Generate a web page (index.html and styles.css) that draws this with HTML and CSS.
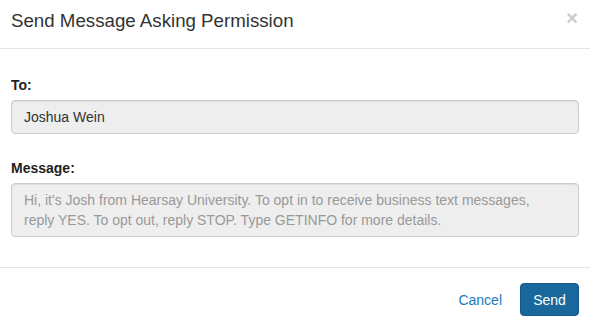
FILE: index.html
```html
<!DOCTYPE html>
<html lang="en">
<head>
  <meta charset="UTF-8">
  <title>Send Message Asking Permission</title>
  <link rel="stylesheet" href="styles.css">
</head>
<body>

<div class="modal">
  <div class="modal-header">
    <h4 class="modal-title">Send Message Asking Permission</h4>
    <button class="close" type="button">&times;</button>
  </div>

  <div class="modal-body">
    <div class="form-group">
      <label for="to">To:</label>
      <input type="text" id="to" class="form-control" value="Joshua Wein" readonly>
    </div>
    <div class="form-group">
      <label for="message">Message:</label>
      <textarea id="message" class="form-control" rows="2" readonly placeholder="Hi, it's Josh from Hearsay University. To opt in to receive business text messages, reply YES. To opt out, reply STOP. Type GETINFO for more details."></textarea>
    </div>
  </div>

  <div class="modal-footer">
    <a href="#" class="btn-link">Cancel</a>
    <button class="btn-primary" type="button">Send</button>
  </div>
</div>

</body>
</html>
```

FILE: styles.css
```css
body {
  margin: 0;
  font-family: 'Liberation Sans', Arial, sans-serif;
  font-size: 14px;
  color: #333;
  background-color: #fff;
}
.modal {
  width: 590px;
}
.modal-header {
  display: flex;
  justify-content: space-between;
  align-items: flex-start;
  padding: 8px 11px 0 11px;
  height: 40px;
  border-bottom: 1px solid #e5e5e5;
}
.modal-title {
  margin: 0;
  font-size: 18.7px;
  font-weight: normal;
  line-height: 26px;
  color: #333;
}
.close {
  border: none;
  background: none;
  padding: 0;
  margin: 0 1px 0 0;
  font-family: 'Liberation Sans', Arial, sans-serif;
  font-size: 20px;
  font-weight: bold;
  line-height: 20px;
  color: #ccc;
  cursor: pointer;
}
.modal-body {
  padding: 26px 11px 30px 11px;
}
.form-group + .form-group {
  margin-top: 24px;
}
.form-group label {
  display: block;
  font-weight: bold;
  line-height: 20px;
  margin-bottom: 5px;
  color: #222;
}
.form-control {
  display: block;
  width: 100%;
  box-sizing: border-box;
  padding: 6px 12px;
  font-family: 'Liberation Sans', Arial, sans-serif;
  font-size: 14px;
  line-height: 20px;
  color: #333;
  background-color: #eee;
  border: 1px solid #ccc;
  border-radius: 4px;
  box-shadow: inset 0 1px 1px rgba(0, 0, 0, 0.075);
}
input.form-control {
  height: 34px;
}
textarea.form-control {
  height: 54px;
  padding-right: 20px;
  resize: none;
  overflow: hidden;
}
.form-control::placeholder {
  color: #999;
}
.modal-footer {
  display: flex;
  justify-content: flex-end;
  align-items: center;
  gap: 18px;
  padding: 15px 11px 11px 11px;
  border-top: 1px solid #e5e5e5;
}
.btn-link {
  color: #1a7ab9;
  text-decoration: none;
}
.btn-primary {
  width: 59px;
  height: 33px;
  padding: 0;
  font-family: 'Liberation Sans', Arial, sans-serif;
  font-size: 14px;
  color: #fff;
  background-color: #19679b;
  border: 1px solid #145a88;
  border-radius: 4px;
  cursor: pointer;
}
```
